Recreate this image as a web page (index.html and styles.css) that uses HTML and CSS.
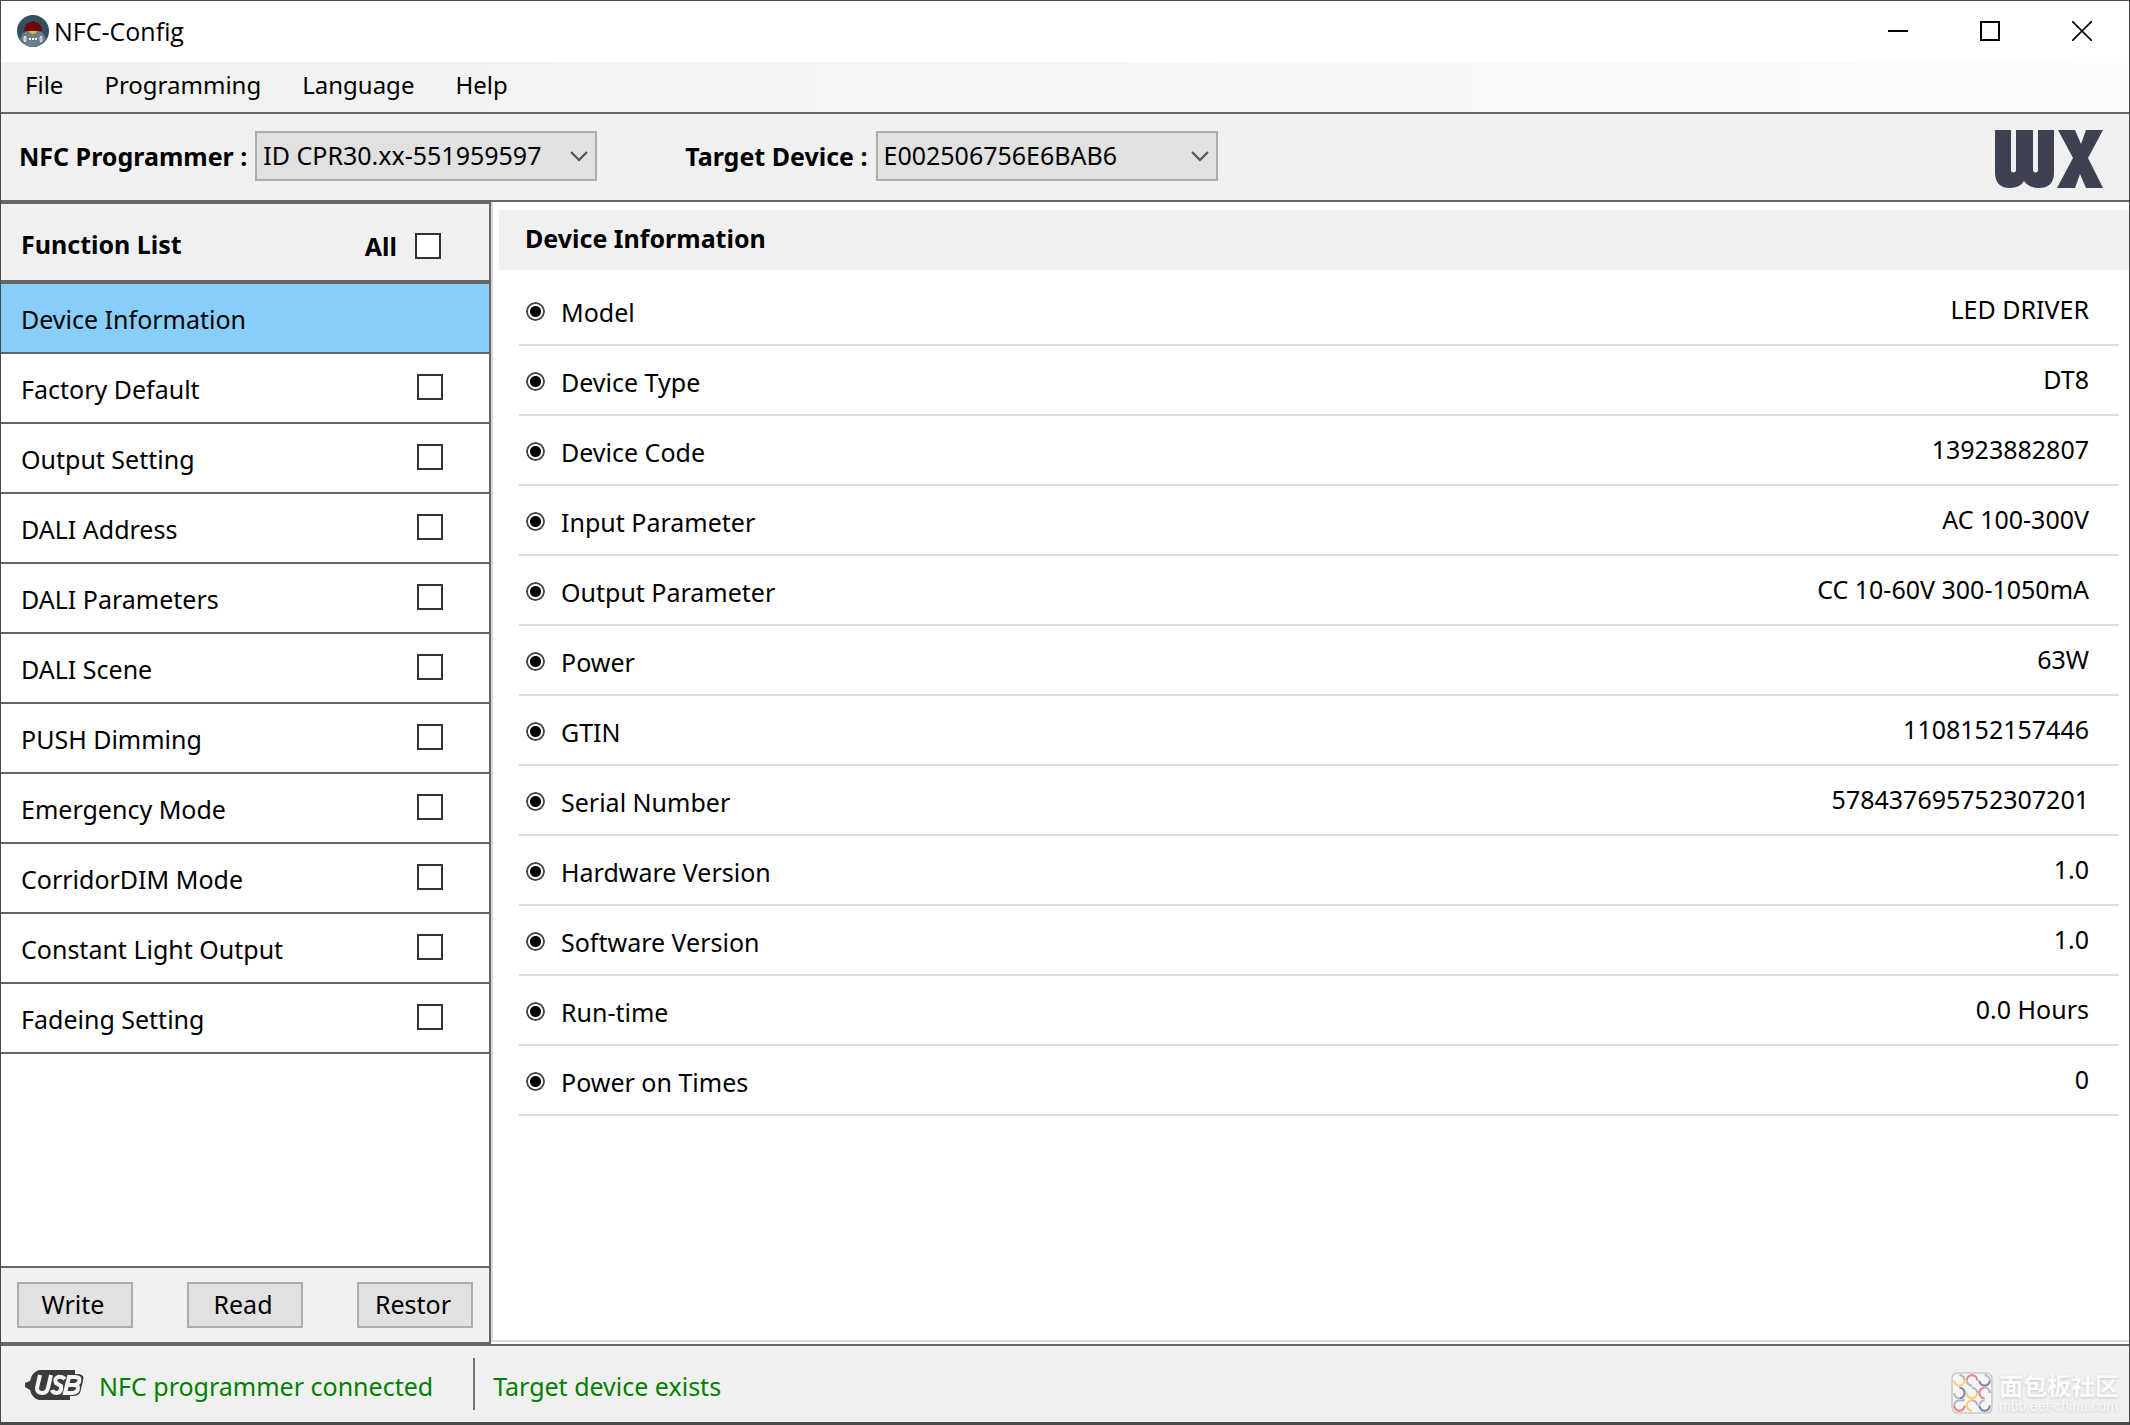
FILE: index.html
```html
<!DOCTYPE html>
<html lang="en">
<head>
<meta charset="utf-8">
<title>NFC-Config</title>
<link rel="stylesheet" href="styles.css">
</head>
<body>
<div class="window">
  <header class="titlebar">
    <svg class="app-icon" viewBox="0 0 32 32" aria-hidden="true">
      <circle cx="16" cy="16" r="16" fill="#34505f"/>
      <path d="M6 18Q16 12 26 18L29 24Q24 32 16 32Q8 32 3 24Z" fill="#6b7f89"/>
      <path d="M7 16Q7 8 14 7Q16 5 18 7Q25 8 25 16Z" fill="#6e0508"/>
      <path d="M12 16H20Q19 19 16 19Q13 19 12 16Z" fill="#e8b93c"/>
      <g fill="none" stroke="#fff"><ellipse cx="8" cy="24" rx="1" ry="3"/><ellipse cx="24" cy="24" rx="1" ry="3"/><path d="M12 24H20" stroke-width="2" stroke-dasharray="2 1"/></g>
    </svg>
    <h1 class="app-title">NFC-Config</h1>
    <div class="window-buttons">
      <button type="button" aria-label="Minimize"><svg viewBox="0 0 20 20"><path d="M0 10H20" stroke-width="2"/></svg></button>
      <button type="button" aria-label="Maximize"><svg viewBox="0 0 20 20"><path d="M1 1H19V19H1Z" stroke-width="2"/></svg></button>
      <button type="button" aria-label="Close"><svg viewBox="0 0 20 20"><path d="M0 0L20 20M20 0L0 20" stroke-width="1.6"/></svg></button>
    </div>
  </header>
  <nav class="menubar">
    <button type="button">File</button>
    <button type="button">Programming</button>
    <button type="button">Language</button>
    <button type="button">Help</button>
  </nav>
  <div class="toolbar">
    <div class="field">
      <label for="programmer">NFC Programmer :</label>
      <select id="programmer"><option>ID CPR30.xx-551959597</option></select>
    </div>
    <div class="field">
      <label for="target">Target Device :</label>
      <select id="target"><option>E002506756E6BAB6</option></select>
    </div>
    <svg class="brand" viewBox="0 0 108 58" role="img" aria-label="WX">
      <path d="M0 0H16V41Q18 44 21 41V0H38V41Q41 44 43 41V0H59V44Q58 58 44 58Q34 58 29 51Q25 58 15 58Q1 58 0 44ZM63 0H80L86 14L91 0H108L93 28L108 58H91L85 44L80 58H62L78 28Z" fill="#3d4152"/>
    </svg>
  </div>
  <main class="workspace">
    <aside class="sidebar">
      <div class="list-header">
        <h2>Function List</h2>
        <label class="all">All <input type="checkbox"></label>
      </div>
      <ul class="functions">
        <li class="selected"><span>Device Information</span></li>
        <li><label><span>Factory Default</span><input type="checkbox"></label></li>
        <li><label><span>Output Setting</span><input type="checkbox"></label></li>
        <li><label><span>DALI Address</span><input type="checkbox"></label></li>
        <li><label><span>DALI Parameters</span><input type="checkbox"></label></li>
        <li><label><span>DALI Scene</span><input type="checkbox"></label></li>
        <li><label><span>PUSH Dimming</span><input type="checkbox"></label></li>
        <li><label><span>Emergency Mode</span><input type="checkbox"></label></li>
        <li><label><span>CorridorDIM Mode</span><input type="checkbox"></label></li>
        <li><label><span>Constant Light Output</span><input type="checkbox"></label></li>
        <li><label><span>Fadeing Setting</span><input type="checkbox"></label></li>
      </ul>
      <div class="actions">
        <button type="button">Write</button>
        <button type="button">Read</button>
        <button type="button">Restor</button>
      </div>
    </aside>
    <section class="details">
      <h2>Device Information</h2>
      <dl class="properties">
        <div><dt>Model</dt><dd>LED DRIVER</dd></div>
        <div><dt>Device Type</dt><dd>DT8</dd></div>
        <div><dt>Device Code</dt><dd>13923882807</dd></div>
        <div><dt>Input Parameter</dt><dd>AC 100-300V</dd></div>
        <div><dt>Output Parameter</dt><dd>CC 10-60V 300-1050mA</dd></div>
        <div><dt>Power</dt><dd>63W</dd></div>
        <div><dt>GTIN</dt><dd>1108152157446</dd></div>
        <div><dt>Serial Number</dt><dd>578437695752307201</dd></div>
        <div><dt>Hardware Version</dt><dd>1.0</dd></div>
        <div><dt>Software Version</dt><dd>1.0</dd></div>
        <div><dt>Run-time</dt><dd>0.0 Hours</dd></div>
        <div><dt>Power on Times</dt><dd>0</dd></div>
      </dl>
    </section>
  </main>
  <footer class="statusbar">
    <svg class="usb" viewBox="0 0 60 30" aria-hidden="true">
      <path d="M14 0H50V4H54Q60 5 58 11L55 23Q53 26 48 26H45V30H14Q7 28 5 20L0 17V13L5 11Q7 2 14 0Z" fill="#3c3c3c"/>
      <g fill="none" stroke="#f4f4f4" stroke-width="4"><path d="M15 5L12 18Q12 23 17 23Q22 23 23 18L26 5"/><path d="M40 9Q37 6 33 7Q29 9 31 13L36 16Q37 22 32 23Q28 23 27 20"/><path d="M44 7L40 23H48Q53 22 53 18Q53 15 49 15H43H50Q56 13 54 8Q53 7 50 7Z"/></g>
    </svg>
    <p class="status">NFC programmer connected</p>
    <p class="status target">Target device exists</p>
    <div class="watermark">
      <svg viewBox="0 0 40 40" aria-hidden="true">
        <rect x="1" y="1" width="38" height="38" rx="5" fill="#f5f5f5" stroke="#b9b9b9"/>
        <g fill="none" stroke-width="2">
          <path d="M3 8A5 5 0 0 0 13 8M20 37A5 5 0 0 1 20 27M15 20A5 5 0 0 0 25 20" stroke="#f6d374"/>
          <path d="M15 8A5 5 0 0 1 25 8M32 25A5 5 0 0 1 32 15M3 32A5 5 0 0 0 13 32" stroke="#f28286"/>
          <path d="M27 8A5 5 0 0 0 37 8M8 25A5 5 0 0 0 8 15M27 32A5 5 0 0 0 37 32" stroke="#8484ae"/>
          <path d="M8 3A5 5 0 0 1 13 8M15 8A5 5 0 0 0 20 13M32 3A5 5 0 0 1 37 8M3 20A5 5 0 0 0 8 25M20 15A5 5 0 0 1 25 20M32 15A5 5 0 0 1 37 20M8 27A5 5 0 0 0 3 32M8 27A5 5 0 0 0 13 26M20 27A5 5 0 0 1 25 32M32 27A5 5 0 0 0 27 32" stroke="#b6b9bd"/>
        </g>
      </svg>
      <p><span class="wm-name" lang="zh">面包板社区</span><span class="wm-url">mbb.eet-china.com</span></p>
    </div>
  </footer>
</div>
</body>
</html>
```
FILE: styles.css
```css
* { box-sizing: border-box; }
html, body { height: 100%; }
body, h1, h2, p, ul, dl, dd { margin: 0; padding: 0; }
body {
  font: 25px/34px "Noto Sans", "Noto Sans CJK SC", sans-serif;
  color: #000;
  background: #fff;
}
button, select, input { font: inherit; color: inherit; margin: 0; }
h2 { font-size: 25px; line-height: 34px; font-weight: 700; }

.window {
  min-height: 100%;
  display: flex;
  flex-direction: column;
  border: 1px solid #4a4a4a;
  border-bottom-width: 3px;
}

.titlebar { display: flex; align-items: center; height: 61px; padding: 0 1px 2px 16px; gap: 5px; }
.app-icon { width: 32px; height: 32px; }
.app-title { flex: 1; font: 400 25px/34px "Open Sans", sans-serif; }
.window-buttons { display: flex; }
.window-buttons button {
  width: 92px; height: 58px; padding: 0;
  border: 0; background: none;
  display: grid; place-items: center;
}
.window-buttons svg { width: 20px; height: 20px; fill: none; stroke: #000; }

.menubar {
  display: flex; gap: 41px;
  height: 50px; padding: 0 24px 4px;
  font-size: 24px;
  background: linear-gradient(90deg, #f0f0f0, #fdfdfd);
}
.menubar button { border: 0; padding: 0; background: none; }

.toolbar {
  display: flex; align-items: center;
  height: 90px; padding: 0 26px 0 18px;
  background: #f0f0f0;
  border-top: 2px solid #666;
  border-bottom: 2px solid #666;
}
.field { display: flex; align-items: center; gap: 8px; margin-right: 88px; padding-bottom: 3px; font-weight: 700; }
.field select {
  width: 342px; height: 50px; padding: 0 40px 2px 6px;
  font-weight: 400;
  border: 2px solid #adadad; border-radius: 0;
  appearance: none;
  background: #e1e1e1 url("data:image/svg+xml,%3Csvg xmlns='http://www.w3.org/2000/svg' width='18' height='12' fill='none' stroke='%23505050' stroke-width='2'%3E%3Cpath d='M1 2L9 10L17 2'/%3E%3C/svg%3E") no-repeat right 7px center;
}
.brand { width: 108px; height: 58px; margin: 4px 0 0 auto; }

.workspace { flex: 1; display: flex; }
.sidebar {
  width: 490px; display: flex; flex-direction: column;
  border: 2px solid #666; border-left: 0;
}
.list-header {
  display: flex; justify-content: space-between; align-items: center;
  height: 80px; padding: 4px 48px 0 20px;
  background: #f0f0f0;
  border-bottom: 4px solid #666;
}
.all { display: flex; align-items: center; gap: 18px; padding-top: 4px; font-weight: 700; }
input[type="checkbox"] {
  appearance: none; width: 26px; height: 26px;
  border: 2px solid #333; background: #fff;
}
.functions { flex: 1; list-style: none; }
.functions li { height: 70px; padding: 2px 46px 0 20px; border-bottom: 2px solid #666; display: flex; align-items: center; }
.functions label { flex: 1; display: flex; align-items: center; justify-content: space-between; }
.functions input { margin-bottom: 4px; }
.selected { background: #87cefa; }
.actions {
  display: flex; justify-content: space-between; align-items: center;
  height: 76px; padding: 0 16px;
  background: #f0f0f0; border-top: 2px solid #666;
}
.actions button { width: 116px; height: 46px; padding: 0 4px 2px 0; border: 2px solid #adadad; background: #e1e1e1; }

.details {
  flex: 1; padding: 8px 0 0 6px;
  border-left: 2px solid #d9d9d9; border-bottom: 2px solid #d9d9d9;
  margin-bottom: 2px;
}
.details h2 { height: 60px; padding: 11px 26px; background: #f0f0f0; }
.properties { padding: 6px 10px 0 20px; }
.properties div {
  display: flex; justify-content: space-between;
  height: 70px; padding: 16px 30px 0 7px;
  border-bottom: 2px solid #dcdcdc;
}
.properties dt { display: flex; align-items: center; gap: 16px; height: 40px; }
.properties dt::before {
  content: ""; width: 19px; height: 19px; margin-bottom: 2px; border-radius: 50%;
  background: radial-gradient(circle, #000 5px, #fff 6px, #fff 7px, #444 8px, #444 9px, transparent 10px);
}

.statusbar {
  display: flex; align-items: center;
  height: 78px; padding: 0 10px 0 24px;
  background: #f0f0f0; border-top: 2px solid #666;
  color: #008000;
}
.usb { width: 60px; height: 30px; margin: 2px 14px 0 0; }
.status { padding-top: 4px; }
.target { height: 52px; margin-left: 40px; padding: 11px 0 0 18px; border-left: 2px solid #777; }
.watermark { display: flex; gap: 6px; margin: 18px 0 0 auto; color: #fafafa; text-shadow: 0 1px 3px #c8c8c8; }
.watermark svg { width: 42px; height: 42px; }
.watermark p { display: flex; flex-direction: column; }
.wm-name { font: 700 24px/26px "Noto Sans CJK SC", sans-serif; }
.wm-url { font: 14px/16px "Liberation Sans", sans-serif; }
```
